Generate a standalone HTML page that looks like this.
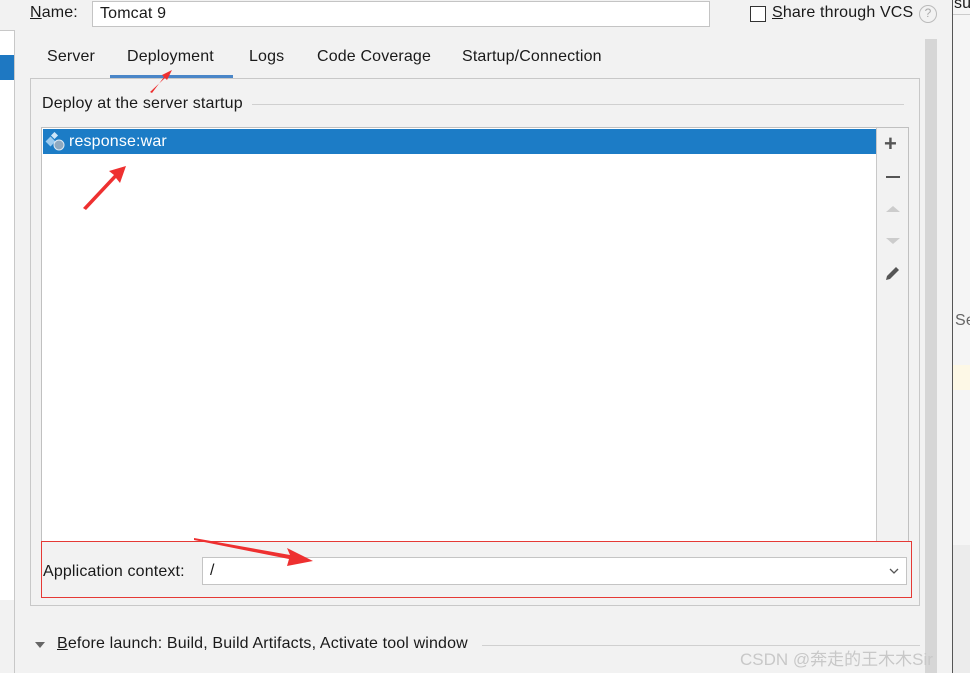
<!DOCTYPE html>
<html><head><meta charset="utf-8"><style>
*{margin:0;padding:0;box-sizing:border-box}
body{width:970px;height:673px;overflow:hidden;background:#f2f2f2;font-family:"Liberation Sans","Noto Sans CJK SC",sans-serif;font-size:16px;letter-spacing:0.15px;color:#1a1a1a;position:relative}
.a{position:absolute;white-space:nowrap}
.r{position:absolute;background:#e53935}
</style></head><body>
<div class="a" style="left:0;top:30px;width:15px;height:570px;background:#fff;border-right:1px solid #c8c8c8;border-top:1px solid #c8c8c8"></div>
<div class="a" style="left:0;top:55px;width:14px;height:25px;background:#1e78c2"></div>
<div class="a" style="left:14px;top:600px;width:1px;height:73px;background:#c8c8c8"></div>

<div class="a" style="left:30px;top:4px"><u>N</u>ame:</div>
<div class="a" style="left:92px;top:1px;width:618px;height:26px;background:#fff;border:1px solid #c4c4c4;padding:3px 7px">Tomcat 9</div>
<div class="a" style="left:750px;top:6px;width:16px;height:16px;border:1.5px solid #333;background:#fff"></div>
<div class="a" style="left:772px;top:4px"><u>S</u>hare through VCS</div>
<div class="a" style="left:919px;top:5px;width:18px;height:18px;border:1.5px solid #bbb;border-radius:50%;color:#aaa;font-size:12px;letter-spacing:0;text-align:center;line-height:15px">?</div>

<div class="a" style="left:47px;top:48px">Server</div>
<div class="a" style="left:127px;top:48px">Deployment</div>
<div class="a" style="left:110px;top:75px;width:123px;height:3px;background:#4a86c8"></div>
<div class="a" style="left:249px;top:48px">Logs</div>
<div class="a" style="left:317px;top:48px">Code Coverage</div>
<div class="a" style="left:462px;top:48px">Startup/Connection</div>

<div class="a" style="left:925px;top:39px;width:12px;height:634px;background:#d6d6d6"></div>
<div class="a" style="left:952px;top:0;width:1px;height:673px;background:#555"></div>
<div class="a" style="left:953px;top:0;width:17px;height:673px;background:#f5f5f5"></div>
<div class="a" style="left:953px;top:14px;width:17px;height:1px;background:#ccc"></div>
<div class="a" style="left:954px;top:-5px">su</div>
<div class="a" style="left:955px;top:312px;color:#666">Se</div>
<div class="a" style="left:953px;top:365px;width:17px;height:25px;background:#fdf8e6"></div>
<div class="a" style="left:953px;top:545px;width:17px;height:128px;background:#ececec"></div>

<div class="a" style="left:30px;top:78px;width:890px;height:528px;border:1px solid #c8c8c8"></div>
<div class="a" style="left:42px;top:95px">Deploy at the server startup</div>
<div class="a" style="left:252px;top:104px;width:652px;height:1px;background:#d0d0d0"></div>
<div class="a" style="left:41px;top:127px;width:868px;height:415px;border:1px solid #c0c0c0;background:#fff"></div>
<div class="a" style="left:876px;top:128px;width:32px;height:413px;background:#f2f2f2;border-left:1px solid #c8c8c8"></div>
<div class="a" style="left:43px;top:129px;width:833px;height:25px;background:#1c7cc6"></div>
<svg class="a" style="left:45px;top:132px" width="22" height="20"><rect x="2" y="6" width="7" height="7" transform="rotate(45 5.5 9.5)" fill="#9ccbef"/><rect x="7" y="1" width="5" height="5" transform="rotate(45 9.5 3.5)" fill="#cfe6f8"/><circle cx="14" cy="13" r="5" fill="#8fa9c0" stroke="#dce9f4"/></svg>
<div class="a" style="left:69px;top:133px;color:#fff">response:war</div>
<div class="a" style="left:884px;top:131px;font-size:22px;color:#555;font-weight:bold">+</div>
<div class="a" style="left:886px;top:176px;width:14px;height:2px;background:#555"></div>
<svg class="a" style="left:885px;top:204px" width="16" height="10"><path d="M1 8 L8 2 L15 8Z" fill="#ccc"/></svg>
<svg class="a" style="left:885px;top:236px" width="16" height="10"><path d="M1 2 L8 8 L15 2Z" fill="#ccc"/></svg>
<svg class="a" style="left:884px;top:264px" width="18" height="18"><path d="M2 16 L3 12 L12 3 L15 6 L6 15Z" fill="#555"/></svg>

<div class="a" style="left:42px;top:542px;width:869px;height:55px;background:#f2f2f2"></div>
<div class="a" style="left:43px;top:563px">Application context:</div>
<div class="a" style="left:202px;top:557px;width:705px;height:28px;background:#fff;border:1px solid #c4c4c4;padding:4px 7px">/</div>
<svg class="a" style="left:888px;top:566px" width="12" height="10"><path d="M2 3 L6 7 L10 3" stroke="#555" fill="none" stroke-width="1.3"/></svg>
<div class="r" style="left:41px;top:541px;width:871px;height:1px"></div>
<div class="r" style="left:41px;top:597px;width:871px;height:1px"></div>
<div class="r" style="left:41px;top:541px;width:1px;height:57px"></div>
<div class="r" style="left:911px;top:541px;width:1px;height:57px"></div>

<svg class="a" style="left:0;top:0" width="970" height="673">
<g fill="#ee3030">
<path d="M150 92 L165 78 L162 75 L172 70 L167 80 L164 77 L152 93Z"/>
<path d="M83 208 L114 175 L109 171 L126 166 L120 183 L116 178 L86 210Z"/>
<path d="M194 538 L290 555 L287 548 L313 561 L287 566 L289 559 L194 540Z"/>
</g></svg>

<svg class="a" style="left:34px;top:640px" width="12" height="10"><path d="M1 2 L11 2 L6 8Z" fill="#666"/></svg>
<div class="a" style="left:57px;top:635px"><u>B</u>efore launch: Build, Build Artifacts, Activate tool window</div>
<div class="a" style="left:482px;top:645px;width:438px;height:1px;background:#d0d0d0"></div>
<div class="a" style="left:740px;top:645px;font-size:17px;letter-spacing:0;color:#c8c8c8">CSDN @奔走的王木木Sir</div>
</body></html>
